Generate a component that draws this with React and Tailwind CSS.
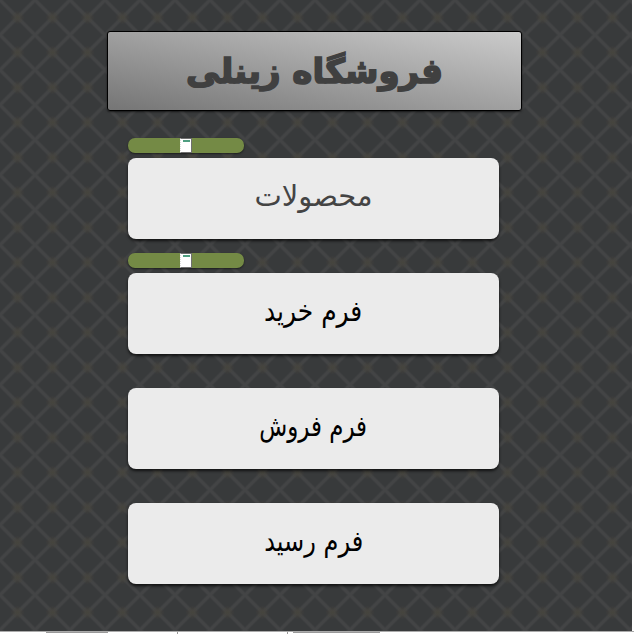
const MENU = [
  { label: "محصولات", gap: "pt-0", pill: true, color: "text-[#444]", squeeze: "scale-x-[1.0]" },
  { label: "فرم خرید", gap: "pt-[14px]", pill: true, color: "text-black", squeeze: "scale-x-[0.86]" },
  { label: "فرم فروش", gap: "pt-[34px]", color: "text-black", squeeze: "scale-x-[0.79]" },
  { label: "فرم رسید", gap: "pt-[34px]", color: "text-black", squeeze: "scale-x-[0.83]" },
];

function Pill() {
  return (
    <div className="mb-[5px] flex h-[15px] w-[116px] justify-center rounded-[7px] bg-[#748a45] shadow-[0_1px_2px_rgba(0,0,0,0.5)]">
      <div className="h-[15px] w-[12px] border border-[#6f6f6f] border-l-[#ddd] bg-white [border-left-style:dotted]">
        <div className="mx-auto mt-[1px] h-[2px] w-[7px] bg-[#4f9e80]" />
      </div>
    </div>
  );
}

export default function App() {
  return (
    <div className="h-[634px] w-[634px] overflow-hidden bg-white font-['DejaVu_Sans',sans-serif]">
      <div className="flex h-[631px] w-[632px] flex-col bg-[#383a3b] bg-[radial-gradient(circle_at_center,#46443d_0,transparent_7px),linear-gradient(45deg,transparent_45%,#434445_48%,#434445_52%,transparent_55%),linear-gradient(135deg,transparent_45%,#434445_48%,#434445_52%,transparent_55%)] bg-[size:35px_35px] pt-[31px] pl-[107px]">
        <div className="flex h-[80px] w-[415px] items-center justify-center rounded-[3px] border border-black bg-[linear-gradient(to_top_right,#757575,#cbcbcb)] shadow-[0_1px_2px_rgba(0,0,0,0.6)]">
          <h1 dir="rtl" className="text-[34px] font-bold text-[#404040] [-webkit-text-stroke:1.6px_#404040]">فروشگاه زینلی</h1>
        </div>
        <div className="mt-[27px] ml-[21px] flex w-[371px] flex-col">
          {MENU.map((item) => (
            <div key={item.label} className={`flex flex-col ${item.gap}`}>
              {item.pill && <Pill />}
              <div
                dir="rtl"
                className={`flex h-[81px] items-center justify-center rounded-[8px] bg-[#ebebeb] pb-[3px] text-[29px] shadow-[0_2px_3px_rgba(0,0,0,0.7)] ${item.color}`}
              >
                <span className={`inline-block ${item.squeeze}`}>{item.label}</span>
              </div>
            </div>
          ))}
        </div>
      </div>
      <div className="flex h-[3px] items-start border-t border-[#aaa]">
        <div className="ml-[46px] h-[1px] w-[62px] bg-[#999]" />
        <div className="ml-[69px] h-[3px] w-[1px] bg-[#999]" />
        <div className="ml-[109px] h-[3px] w-[1px] bg-[#999]" />
        <div className="ml-[5px] h-[1px] w-[87px] bg-[#999]" />
      </div>
    </div>
  );
}
